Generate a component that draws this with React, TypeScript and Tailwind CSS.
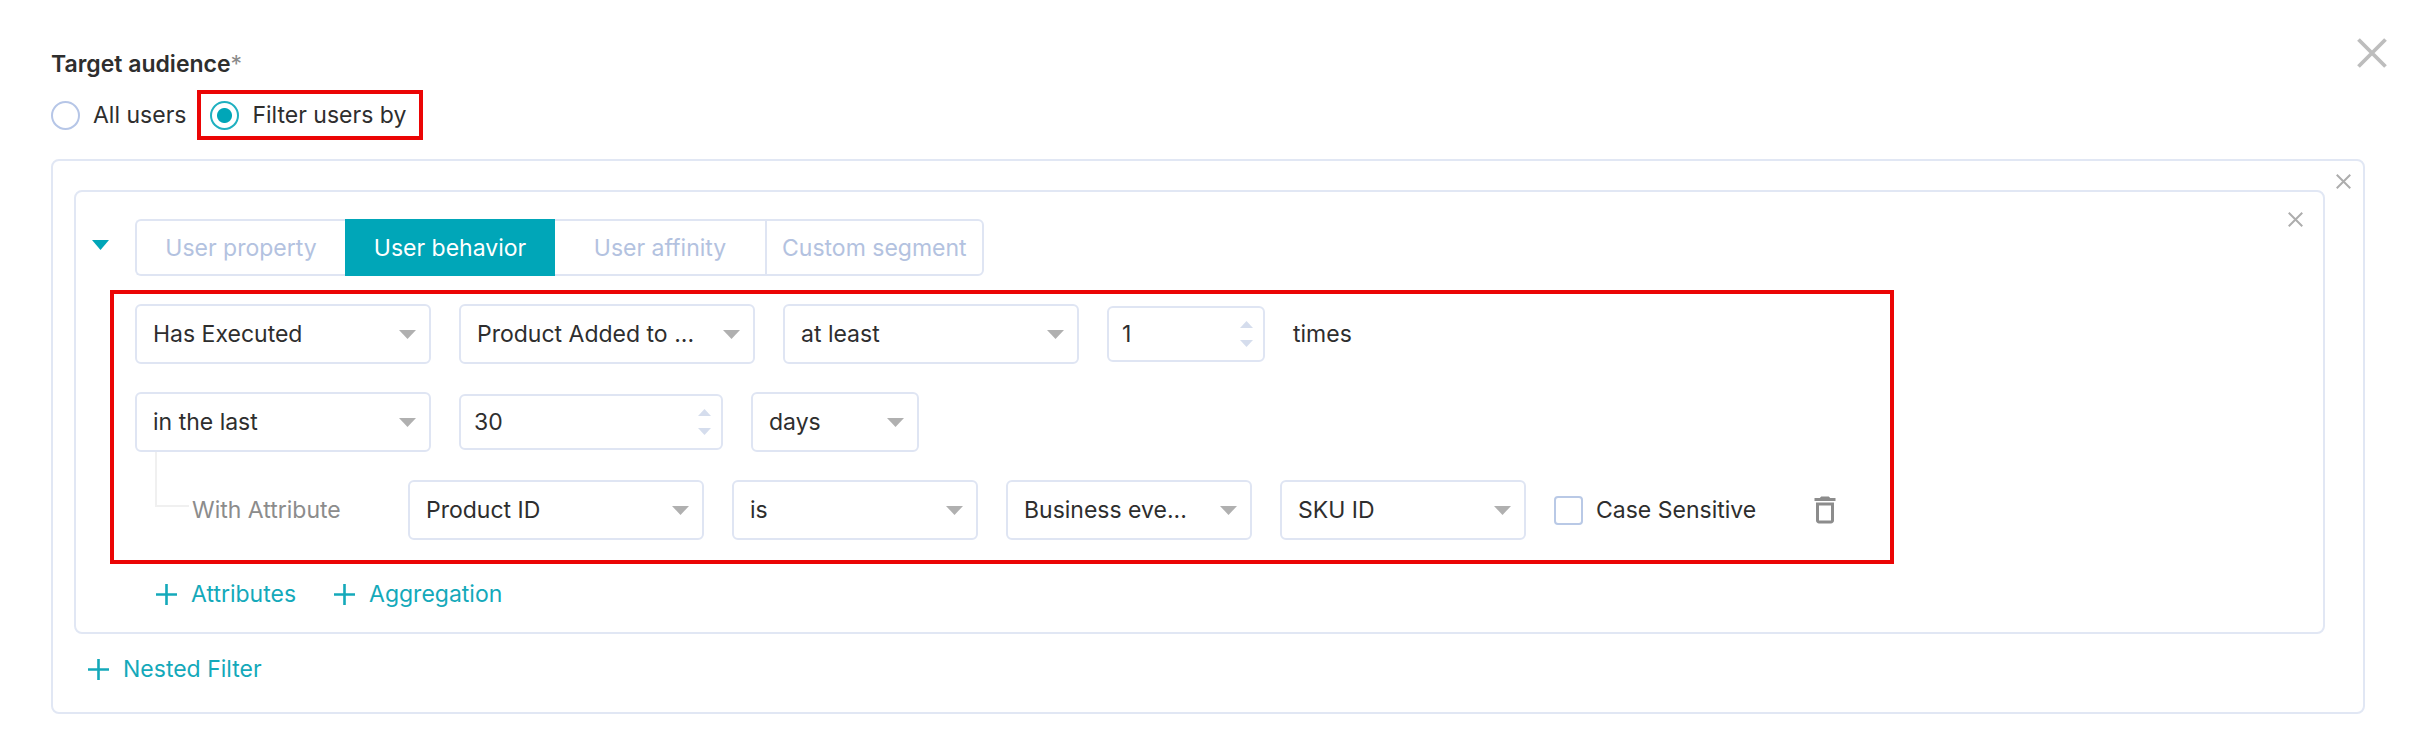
import React, { useState } from "react";
import { MdDeleteOutline } from "react-icons/md";

function Cross({ className }: { className: string }) {
  return (
    <svg viewBox="0 0 30 30" className={className} fill="none" stroke="currentColor" aria-hidden="true">
      <path d="M1.5 1.5 28.5 28.5M28.5 1.5 1.5 28.5" />
    </svg>
  );
}

function Caret({ className, up = false }: { className: string; up?: boolean }) {
  return (
    <svg viewBox="0 0 18 10" preserveAspectRatio="none" className={className} fill="currentColor" aria-hidden="true">
      <path d={up ? "M0 10 9 0 18 10Z" : "M0 0H18L9 10Z"} />
    </svg>
  );
}

function Select({ label, options, className }: { label: string; options: string[]; className: string }) {
  return (
    <div className={`relative h-[60px] ${className}`}>
      <select
        aria-label={label}
        className="h-full w-full appearance-none rounded-md border-2 border-[#dfe5f3] bg-white pr-9 pl-4 outline-none"
      >
        {options.map((o) => (
          <option key={o}>{o}</option>
        ))}
      </select>
      <Caret className="pointer-events-none absolute top-[26px] right-[15px] h-[9px] w-[17px] text-[#b0b0b0]" />
    </div>
  );
}

function NumberField({ label, initial, className }: { label: string; initial: number; className: string }) {
  const [value, setValue] = useState(initial);
  return (
    <div className={`relative h-14 ${className}`}>
      <input
        type="number"
        aria-label={label}
        value={value}
        onChange={(e) => setValue(Number(e.target.value))}
        className="h-full w-full [appearance:textfield] rounded-md border-2 border-[#dfe5f3] bg-white pr-9 pl-[13px] outline-none [&::-webkit-inner-spin-button]:appearance-none"
      />
      <div className="absolute inset-y-0 right-3 flex flex-col justify-center gap-3 text-[#d5dded]">
        <button type="button" aria-label={`Increase ${label}`} onClick={() => setValue(value + 1)}>
          <Caret up className="block h-[7px] w-[13px]" />
        </button>
        <button type="button" aria-label={`Decrease ${label}`} onClick={() => setValue(value - 1)}>
          <Caret className="block h-[7px] w-[13px]" />
        </button>
      </div>
    </div>
  );
}

function Radio({ label, checked, onChange }: { label: string; checked: boolean; onChange: () => void }) {
  return (
    <label className="flex items-center gap-[13px]">
      <input
        type="radio"
        name="audience"
        checked={checked}
        onChange={onChange}
        className="size-[29px] appearance-none rounded-full border-2 border-[#b6c6e7] bg-white checked:border-[#1fb0c0] checked:bg-[radial-gradient(circle,#00a6b8_7px,transparent_8px)]"
      />
      {label}
    </label>
  );
}

function AddButton({ label }: { label: string }) {
  return (
    <button type="button" className="flex items-center gap-[14px] text-[#14a9ba]">
      <svg viewBox="0 0 21 21" className="size-[21px]" stroke="currentColor" strokeWidth="2.6" aria-hidden="true">
        <path d="M10.5 0V21M0 10.5H21" />
      </svg>
      {label}
    </button>
  );
}

const tabs = ["User property", "User behavior", "User affinity", "Custom segment"];

export default function App() {
  const [audience, setAudience] = useState("filter");
  const [tab, setTab] = useState("User behavior");

  return (
    <main className="bg-white pb-4 font-['Inter',sans-serif] text-[23px] leading-8 text-[#2e2e2e]">
      <header className="flex items-start justify-between pt-[38px] pr-[27px] pl-[51px]">
        <h1 className="mt-[10px] font-semibold">
          Target audience<span className="font-normal text-[#8a8a8a]">*</span>
        </h1>
        <button type="button" aria-label="Close" className="text-[#bdbdbd]">
          <Cross className="block size-[30px] stroke-[3.8px]" />
        </button>
      </header>

      <div className="pr-[49px] pl-[51px]">
        <div role="radiogroup" aria-label="Target audience" className="mt-[10px] flex items-center">
          <Radio label="All users" checked={audience === "all"} onChange={() => setAudience("all")} />
          <div className="ml-[11px] flex h-[50px] items-center border-4 border-[#eb0505] pr-[13px] pl-[9px]">
            <Radio label="Filter users by" checked={audience === "filter"} onChange={() => setAudience("filter")} />
          </div>
        </div>

        <section className="mt-[19px] rounded-lg border-2 border-[#e1e7f4] pb-[27px]">
          <div className="flex items-start">
            <div className="mt-[29px] ml-[21px] flex flex-1 items-start rounded-lg border-2 border-[#e1e7f4] pb-[22px]">
              <button type="button" aria-label="Collapse filter" className="mt-12 ml-4 w-[18px] shrink-0 text-[#00a6b8]">
                <Caret className="block h-[10px] w-[17px]" />
              </button>

              <div className="mt-[27px] min-w-0 flex-1">
                <div role="tablist" className="ml-[25px] flex h-[57px]">
                  {tabs.map((t) => (
                    <button
                      key={t}
                      type="button"
                      role="tab"
                      aria-selected={t === tab}
                      onClick={() => setTab(t)}
                      className={`min-w-[210px] border-y-2 px-[15px] first:rounded-l-md first:border-l-2 last:rounded-r-md last:border-x-2 ${
                        t === tab ? "border-[#00a6b8] bg-[#00a6b8] text-white" : "border-[#dfe5f3] text-[#b3c2e0]"
                      }`}
                    >
                      {t}
                    </button>
                  ))}
                </div>

                <div className="mt-[14px] flex w-fit flex-col gap-7 border-4 border-[#eb0505] pt-[10px] pr-[47px] pb-5 pl-[21px]">
                  <div className="flex items-center gap-7">
                    <Select label="Execution" options={["Has Executed", "Has Not Executed"]} className="w-[296px]" />
                    <Select label="Event" options={["Product Added to ..."]} className="w-[296px]" />
                    <Select label="Comparison" options={["at least", "at most"]} className="w-[296px]" />
                    <NumberField label="times" initial={1} className="w-[158px]" />
                    <span>times</span>
                  </div>
                  <div className="flex items-center gap-7">
                    <Select label="Period" options={["in the last"]} className="w-[296px]" />
                    <NumberField label="period length" initial={30} className="w-[264px]" />
                    <Select label="Unit" options={["days", "weeks"]} className="w-[168px]" />
                  </div>
                  <div className="flex items-center gap-7">
                    <div className="flex w-[245px] items-center gap-[3px] self-stretch text-[#8c8c8c]">
                      <div className="-mt-7 ml-5 h-[55px] w-[34px] self-start border-b-2 border-l-2 border-[#f0f0f0]" />
                      <span className="whitespace-nowrap">With Attribute</span>
                    </div>
                    <Select label="Attribute" options={["Product ID"]} className="w-[296px]" />
                    <Select label="Operator" options={["is", "is not"]} className="w-[246px]" />
                    <Select label="Value source" options={["Business eve..."]} className="w-[246px]" />
                    <Select label="Value" options={["SKU ID"]} className="w-[246px]" />
                    <label className="flex items-center gap-[13px]">
                      <input
                        type="checkbox"
                        className="size-[29px] appearance-none rounded-[4px] border-2 border-[#b9c9e6] bg-white checked:bg-[#00a6b8]"
                      />
                      Case Sensitive
                    </label>
                    <button type="button" aria-label="Delete attribute" className="ml-[23px] text-[#8c8c8c]">
                      <MdDeleteOutline size={36} />
                    </button>
                  </div>
                </div>

                <div className="mt-[14px] flex gap-[38px] pl-[46px]">
                  <AddButton label="Attributes" />
                  <AddButton label="Aggregation" />
                </div>
              </div>

              <button type="button" aria-label="Remove filter" className="mt-5 mr-5 text-[#adadad]">
                <Cross className="block size-[15px] stroke-[4px]" />
              </button>
            </div>

            <button type="button" aria-label="Remove filter group" className="mt-[13px] mr-3 ml-[11px] text-[#adadad]">
              <Cross className="block size-[15px] stroke-[4px]" />
            </button>
          </div>

          <div className="mt-[19px] flex pl-[35px]">
            <AddButton label="Nested Filter" />
          </div>
        </section>
      </div>
    </main>
  );
}
